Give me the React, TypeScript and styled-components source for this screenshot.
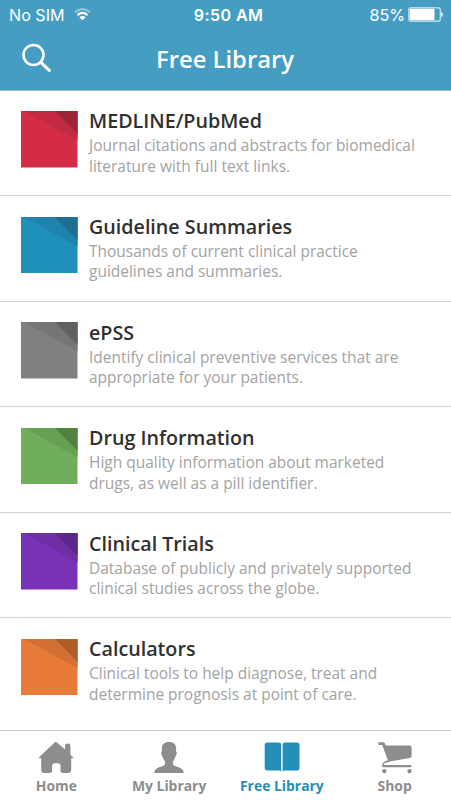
import React from 'react';
import styled, { createGlobalStyle } from 'styled-components';

const GlobalStyle = createGlobalStyle`
  * { box-sizing: border-box; }
  body { margin: 0; background: #fff; font-family: "Open Sans", "Noto Sans", sans-serif; }
`;

const Screen = styled.div`
  width: 451px;
  height: 800px;
  display: flex;
  flex-direction: column;
  overflow: hidden;
  background: #fff;
`;

const Header = styled.header`
  height: 91px;
  flex: none;
  background: #459ec1;
  border-bottom: 1px solid #a9b9cb;
  color: #fff;
`;

const StatusBar = styled.div`
  height: 29px;
  display: grid;
  grid-template-columns: 1fr auto 1fr;
  align-items: center;
  padding: 0 8px 0 9px;
  font: 400 16.1px/28px Inter, sans-serif;
`;

const StatusGroup = styled.div<{ $end?: boolean }>`
  display: flex;
  align-items: center;
  gap: ${(p) => (p.$end ? 3 : 9)}px;
  justify-content: ${(p) => (p.$end ? 'flex-end' : 'flex-start')};
`;

const Clock = styled.span`
  font-weight: 600;
  letter-spacing: 0.4px;
  padding-left: 5px;
`;

const NavBar = styled.div`
  height: 61px;
  display: grid;
  grid-template-columns: 60px 1fr 60px;
  align-items: center;
`;

const SearchButton = styled.button`
  border: 0;
  background: none;
  padding: 0 0 3px 21px;
  height: 100%;
  display: flex;
  align-items: center;
`;

const Heading = styled.h1`
  margin: 0;
  padding: 0 1px 1px 0;
  text-align: center;
  font-size: 23.8px;
  line-height: 32px;
  font-weight: 600;
`;

const List = styled.main`
  height: 639.6px;
  margin-top: -0.6px;
  flex: none;
`;

const Row = styled.article`
  height: 105.6px;
  display: flex;
  padding: 20.6px 0 0 21px;
  gap: 11.5px;
  border-bottom: 1px solid #d2d2d2;
  &:last-child { border-bottom: 0; }
`;

const Tile = styled.svg`
  width: 56.5px;
  height: 56.5px;
  flex: none;
`;

const RowText = styled.div`
  margin-top: -4.6px;
  white-space: nowrap;
`;

const RowTitle = styled.h2`
  margin: 0;
  font-size: 19.7px;
  line-height: 29px;
  font-weight: 600;
  color: #303030;
`;

const RowDetail = styled.p`
  margin: 0;
  font-size: 15.47px;
  line-height: 20.4px;
  color: #a3a3a3;
`;

const TabBar = styled.nav`
  height: 70px;
  flex: none;
  display: grid;
  grid-template-columns: repeat(4, 1fr);
  border-top: 1px solid #c6c6c6;
`;

const Tab = styled.div<{ $active?: boolean }>`
  display: flex;
  flex-direction: column;
  align-items: center;
  padding-top: 10px;
  gap: 1px;
  white-space: nowrap;
  font-size: 13.9px;
  line-height: 20px;
  font-weight: 700;
  color: ${(p) => (p.$active ? '#238fba' : '#8d8d8d')};
`;

const TabIcon = styled.svg`
  width: 38px;
  height: 34px;
  fill: currentColor;
`;

type Entry = { title: string; lines: [string, string]; base: string; mid: string; dark: string };

const entries: Entry[] = [
  { title: 'MEDLINE/PubMed', lines: ['Journal citations and abstracts for biomedical', 'literature with full text links.'], base: '#d42b46', mid: '#c22a42', dark: '#9e2337' },
  { title: 'Guideline Summaries', lines: ['Thousands of current clinical practice', 'guidelines and summaries.'], base: '#1f8fbc', mid: '#2083ab', dark: '#1d6e91' },
  { title: 'ePSS', lines: ['Identify clinical preventive services that are', 'appropriate for your patients.'], base: '#808080', mid: '#767676', dark: '#606060' },
  { title: 'Drug Information', lines: ['High quality information about marketed', 'drugs, as well as a pill identifier.'], base: '#70ae5c', mid: '#67a052', dark: '#518242' },
  { title: 'Clinical Trials', lines: ['Database of publicly and privately supported', 'clinical studies across the globe.'], base: '#7831b7', mid: '#6e2fa6', dark: '#59288a' },
  { title: 'Calculators', lines: ['Clinical tools to help diagnose, treat and', 'determine prognosis at point of care.'], base: '#e77b37', mid: '#d27034', dark: '#b15d2a' },
];

const tabs = [
  {
    label: 'Home',
    icon: (
      <path d="M19 0.8 L28 8.6 V4.8 Q28 2.5 30.7 2.5 Q33.4 2.5 33.4 4.8 V13.8 L36.2 16.2 Q36.5 17.3 35.2 17.3 H34.2 V28.5 Q34.2 32 30.7 32 H26.2 Q23.5 32 23.5 29.8 V25 Q23.5 22.2 20.7 22.2 H17.9 Q15.1 22.2 15.1 25 V29.8 Q15.1 32 12.4 32 H7.7 Q4.2 32 4.2 28.5 V17.3 H2.8 Q1.6 17.3 2 16.2 L18 1.2 Q18.5 0.7 19 0.8Z" />
    ),
  },
  {
    label: 'My Library',
    icon: (
      <path d="M19 1 C23.8 1 26.2 3.5 26.1 7.5 V10.8 C27.3 11 26.9 13.6 25.4 15.6 C24.8 18.3 23.8 19.5 23 20.5 V23 C23 26 33.5 25.5 33.8 31.4 Q33.8 32 33.1 32 H4.9 Q4.2 32 4.2 31.4 C4.5 25.5 15 26 15 23 V20.5 C14.2 19.5 13.2 18.3 12.6 15.6 C11.1 13.6 10.7 11 11.9 10.8 V7.5 C11.8 3.5 14.2 1 19 1Z" />
    ),
  },
  {
    label: 'Free Library',
    active: true,
    icon: (
      <path d="M4.2 1.4 H15.5 Q18.2 1.4 18.2 3.2 V30.7 Q17.8 29.5 15.5 29.5 H4.2 Q1.7 29.5 1.7 27 V3.9 Q1.7 1.4 4.2 1.4Z M22.3 1.4 H34 Q36.5 1.4 36.5 3.9 V27 Q36.5 29.5 34 29.5 H22.3 Q20 29.5 19.6 30.7 V3.2 Q19.6 1.4 22.3 1.4Z" />
    ),
  },
  {
    label: 'Shop',
    icon: (
      <>
        <path d="M3.2 1.3 H7.6 Q8.4 1.3 8.7 2.1 L9.8 4.6 H33.6 Q35.6 4.6 35.6 6.6 V15 Q35.6 16.5 33.8 16.9 L15.2 20.2 L8.6 22.3 Q7.6 22.7 7.6 23.9 H34.4 Q35.6 23.9 35.6 25.1 Q35.6 26.3 34.4 26.3 H7.4 Q6.1 26.3 6.1 24.8 V23.7 Q6.2 21.8 8.1 20.9 L11.8 19 L6.2 4 H3.2 Q2.2 4 2.2 2.7 Q2.2 1.3 3.2 1.3Z" />
        <circle cx="8.3" cy="30.1" r="2.2" />
        <circle cx="33.5" cy="30.1" r="2.2" />
      </>
    ),
  },
];

export default function App() {
  return (
    <>
      <GlobalStyle />
      <Screen>
        <Header>
          <StatusBar>
            <StatusGroup>
              <span>No SIM</span>
              <svg width="17" height="13" viewBox="0 0 17 13" fill="none" stroke="#fff">
                <path d="M1 4.3 Q8.5 -2.2 16 4.3" strokeWidth="2" opacity=".45" />
                <path d="M3.5 7.1 Q8.5 2.8 13.5 7.1" strokeWidth="2.1" />
                <path d="M5.4 9.2 Q8.5 6.8 11.6 9.2 L8.5 12.3Z" fill="#fff" stroke="none" />
              </svg>
            </StatusGroup>
            <Clock>9:50 AM</Clock>
            <StatusGroup $end>
              <span>85%</span>
              <svg width="35" height="15" viewBox="0 0 35 15">
                <rect x="0.7" y="0.7" width="31.6" height="13.6" rx="2.2" fill="none" stroke="#b5dae8" strokeWidth="1.4" />
                <rect x="1.7" y="1.7" width="24.8" height="11.6" rx="0.8" fill="#fff" />
                <path d="M33 5 Q35 5.3 35 7.5 Q35 9.7 33 10Z" fill="#d6edf5" />
              </svg>
            </StatusGroup>
          </StatusBar>
          <NavBar>
            <SearchButton aria-label="Search">
              <svg width="31" height="30" viewBox="0 0 31 30" fill="none" stroke="#fff" strokeWidth="2.6" strokeLinecap="round">
                <circle cx="12.5" cy="12" r="10" />
                <path d="M19.8 19.3 L28.3 27.4" strokeWidth="3" />
              </svg>
            </SearchButton>
            <Heading>Free Library</Heading>
          </NavBar>
        </Header>
        <List>
          {entries.map((e) => (
            <Row key={e.title}>
              <Tile viewBox="0 0 56 56">
                <rect width="56" height="56" fill={e.base} />
                <path d="M3 0 H56 V29Z" fill={e.mid} />
                <path d="M33.5 0 H56 V22.5Z" fill={e.dark} />
              </Tile>
              <RowText>
                <RowTitle>{e.title}</RowTitle>
                <RowDetail>
                  {e.lines[0]}
                  <br />
                  {e.lines[1]}
                </RowDetail>
              </RowText>
            </Row>
          ))}
        </List>
        <TabBar>
          {tabs.map((t) => (
            <Tab key={t.label} $active={t.active}>
              <TabIcon viewBox="0 0 38 34">{t.icon}</TabIcon>
              <span>{t.label}</span>
            </Tab>
          ))}
        </TabBar>
      </Screen>
    </>
  );
}
